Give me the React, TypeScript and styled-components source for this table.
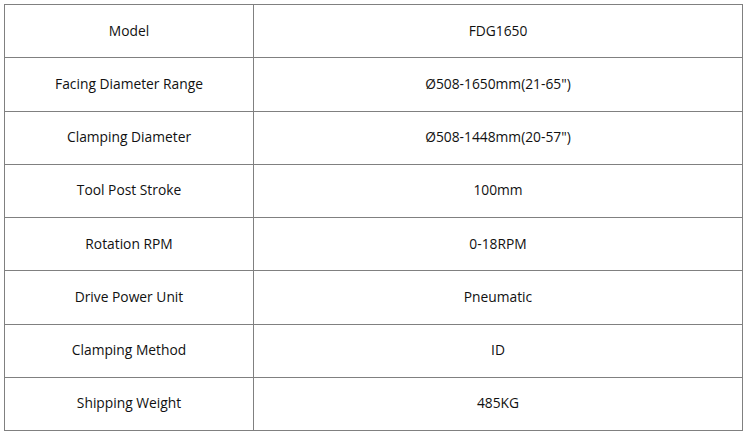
import React from "react";
import styled, { createGlobalStyle } from "styled-components";

const GlobalStyle = createGlobalStyle`
  html, body { margin: 0; padding: 0; background: #ffffff; }
  body { padding: 4px; font-family: "Open Sans", "Liberation Sans", sans-serif; }
`;

const SpecTable = styled.table`
  border-collapse: collapse;
  width: 739px;
  table-layout: fixed;
  color: #111111;
  font-size: 13.8px;
`;

const LabelCol = styled.col`
  width: 249px;
`;

const Row = styled.tr`
  height: 53.25px;
`;

const Cell = styled.td`
  border: 1px solid #808080;
  text-align: center;
  vertical-align: middle;
  padding: 0 0 2px 0;
`;

const rows: [string, string][] = [
  ["Model", "FDG1650"],
  ["Facing Diameter Range", "Ø508-1650mm(21-65\")"],
  ["Clamping Diameter", "Ø508-1448mm(20-57\")"],
  ["Tool Post Stroke", "100mm"],
  ["Rotation RPM", "0-18RPM"],
  ["Drive Power Unit", "Pneumatic"],
  ["Clamping Method", "ID"],
  ["Shipping Weight", "485KG"],
];

export default function App() {
  return (
    <>
      <GlobalStyle />
      <SpecTable>
        <colgroup>
          <LabelCol />
          <col />
        </colgroup>
        <tbody>
          {rows.map(([k, v]) => (
            <Row key={k}>
              <Cell>{k}</Cell>
              <Cell>{v}</Cell>
            </Row>
          ))}
        </tbody>
      </SpecTable>
    </>
  );
}
